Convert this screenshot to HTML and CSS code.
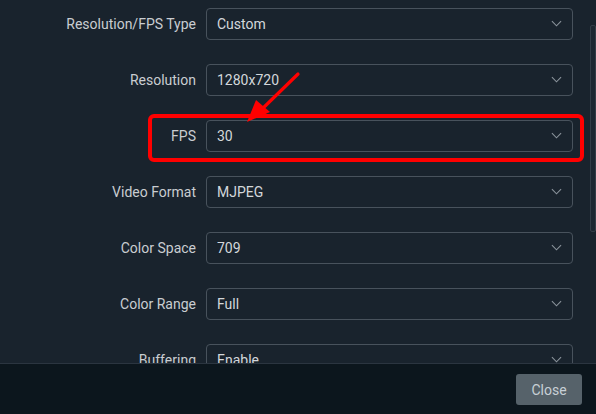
FILE: index.html
```html
<!DOCTYPE html>
<html>
<head>
<meta charset="utf-8">
<link rel="stylesheet" href="styles.css">
</head>
<body>
<div class="modal">
  <div class="modal-body">
    <div class="form">
      <div class="row"><label class="label">Resolution/FPS Type</label><div class="select"><span>Custom</span><svg class="chev" viewBox="0 0 12 7"><path d="M1 1 L6 6 L11 1"/></svg></div></div>
      <div class="row"><label class="label">Resolution</label><div class="select"><span>1280x720</span><svg class="chev" viewBox="0 0 12 7"><path d="M1 1 L6 6 L11 1"/></svg></div></div>
      <div class="row"><label class="label">FPS</label><div class="select"><span>30</span><svg class="chev" viewBox="0 0 12 7"><path d="M1 1 L6 6 L11 1"/></svg></div></div>
      <div class="row"><label class="label">Video Format</label><div class="select"><span>MJPEG</span><svg class="chev" viewBox="0 0 12 7"><path d="M1 1 L6 6 L11 1"/></svg></div></div>
      <div class="row"><label class="label">Color Space</label><div class="select"><span>709</span><svg class="chev" viewBox="0 0 12 7"><path d="M1 1 L6 6 L11 1"/></svg></div></div>
      <div class="row"><label class="label">Color Range</label><div class="select"><span>Full</span><svg class="chev" viewBox="0 0 12 7"><path d="M1 1 L6 6 L11 1"/></svg></div></div>
      <div class="row"><label class="label">Buffering</label><div class="select"><span>Enable</span><svg class="chev" viewBox="0 0 12 7"><path d="M1 1 L6 6 L11 1"/></svg></div></div>
    </div>
    <div class="scrollbar"></div>
    <div class="highlight"></div>
    <svg class="arrow" viewBox="0 0 596 414" width="596" height="414">
      <line x1="298" y1="74" x2="258" y2="113" stroke="#ff0000" stroke-width="3.2" stroke-linecap="round"/>
      <polygon points="247,122 256,100 270,112" fill="#ff0000"/>
    </svg>
  </div>
  <div class="modal-footer">
    <button class="btn-close">Close</button>
  </div>
</div>
</body>
</html>
```
FILE: styles.css
```css
html, body {
  margin: 0;
  padding: 0;
  background: #19232d;
  width: 596px;
  height: 414px;
  overflow: hidden;
  font-family: Roboto, "Liberation Sans", sans-serif;
}
.modal {
  display: flex;
  flex-direction: column;
  height: 414px;
}
.modal-body {
  position: relative;
  height: 363px;
  overflow: hidden;
  padding-top: 8px;
  box-sizing: border-box;
}
.form {
  display: flex;
  flex-direction: column;
  gap: 24px;
}
.row {
  display: grid;
  grid-template-columns: 196px 367px;
  column-gap: 10px;
  align-items: center;
}
.label {
  text-align: right;
  color: #c9cdd1;
  font-size: 14px;
  line-height: 16px;
  padding-bottom: 1px;
}
.select {
  height: 32px;
  box-sizing: border-box;
  border: 1px solid #48525c;
  border-radius: 4px;
  display: flex;
  align-items: center;
  justify-content: space-between;
  padding: 0 10px 1px 10px;
  color: #d3d7db;
  font-size: 14px;
  line-height: 16px;
}
.chev {
  width: 11px;
  height: 7px;
  fill: none;
  stroke: #8a939b;
  stroke-width: 1.2;
}
.scrollbar {
  position: absolute;
  left: 590px;
  top: 25px;
  width: 4px;
  height: 205px;
  border: 1px solid #333d47;
  border-radius: 2px;
  background: #1d2731;
}
.highlight {
  position: absolute;
  left: 148px;
  top: 114px;
  width: 436px;
  height: 48px;
  box-sizing: border-box;
  border: 4px solid #ff0000;
  border-radius: 6px;
}
.arrow {
  position: absolute;
  left: 0;
  top: 0;
}
.modal-footer {
  flex: 1;
  background: #0c161d;
  border-top: 1px solid #2b3540;
  display: flex;
  justify-content: flex-end;
  align-items: flex-start;
  padding: 10px 14px 0 0;
}
.btn-close {
  width: 66px;
  height: 31px;
  border: none;
  border-radius: 3px;
  background: #56626a;
  color: #c8d0d6;
  font-family: Roboto, "Liberation Sans", sans-serif;
  font-size: 14px;
  padding: 0;
}
```
